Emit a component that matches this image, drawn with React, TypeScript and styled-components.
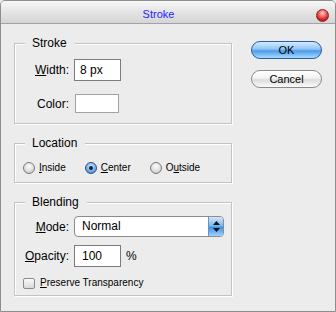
import React from 'react'
import styled, { createGlobalStyle, css } from 'styled-components'

const Global = createGlobalStyle`
    html, body {
        margin: 0;
        padding: 0;
        background: #ececec;
    }
    * {
        box-sizing: border-box;
    }
`

const Window = styled.div`
    width: 336px;
    height: 312px;
    display: flex;
    flex-direction: column;
    background: #ececec;
    border: 1px solid #8e8e8e;
    border-radius: 5px 5px 0 0;
    font-family: "Liberation Sans", Arial, sans-serif;
    color: #000;
    overflow: hidden;
`

const TitleBar = styled.div`
    height: 23px;
    flex: none;
    display: flex;
    align-items: flex-start;
    background: linear-gradient(#f7f7f7, #e6e6e6 45%, #d5d5d5);
    border-bottom: 1px solid #a3a3a3;
`

const Title = styled.div`
    flex: 1;
    text-align: center;
    padding-top: 7px;
    font-size: 11px;
    line-height: 13px;
    color: #1f22ff;
`

const CloseDot = styled.div`
    width: 13px;
    height: 13px;
    margin: 8px 6px 0 0;
    border-radius: 50%;
    border: 1px solid #8a2020;
    background: radial-gradient(circle at 50% 30%, #ffd2d2 0, #f26a6a 35%, #c41414 75%, #e85050 100%);
`

const Body = styled.div`
    display: flex;
    align-items: flex-start;
    padding: 17px 0 0 13px;
`

const LeftColumn = styled.div`
    display: flex;
    flex-direction: column;
    gap: 19px;
    padding-top: 2px;
`

const Group = styled.div<{ $height: number }>`
    position: relative;
    width: 218px;
    height: ${ p => p.$height }px;
    border: 1px solid #c3c3c3;
    box-shadow: 1px 1px 0 #fff, inset 1px 1px 0 #fff;
`

const Legend = styled.div`
    position: absolute;
    top: -8px;
    left: 10px;
    padding: 0 8px 0 7px;
    background: #ececec;
    font-size: 12px;
    line-height: 14px;
`

const FieldGrid = styled.div<{ $top: number, $gap: number }>`
    display: grid;
    grid-template-columns: 54px auto;
    column-gap: 5px;
    row-gap: ${ p => p.$gap }px;
    align-items: center;
    justify-items: start;
    padding-top: ${ p => p.$top }px;
`

const Label = styled.div`
    justify-self: end;
    font-size: 12px;
    line-height: 14px;
`

const Key = styled.span`
    text-decoration: underline;
    text-underline-offset: 1px;
`

const TextInput = styled.div<{ $width: number, $indent: number }>`
    width: ${ p => p.$width }px;
    height: 22px;
    background: #fff;
    border: 1px solid #7c7c7c;
    padding-left: ${ p => p.$indent }px;
    font-size: 12px;
    line-height: 20px;
`

const Swatch = styled.div`
    width: 44px;
    height: 19px;
    margin-left: 1px;
    background: #fff;
    border: 1px solid #a2a2a2;
`

const InlineRow = styled.div`
    display: flex;
    align-items: center;
    gap: 5px;
    font-size: 12px;
`

const Select = styled.div`
    width: 150px;
    height: 21px;
    display: flex;
    background: #fff;
    border: 1px solid #8c8c8c;
    border-radius: 4px;
    overflow: hidden;
`

const SelectValue = styled.div`
    flex: 1;
    padding-left: 7px;
    font-size: 12px;
    line-height: 19px;
`

const SelectArrows = styled.div`
    width: 15px;
    display: flex;
    align-items: center;
    justify-content: center;
    border-left: 1px solid #6d90c0;
    background: linear-gradient(#cfe6fb, #7cb8f0 45%, #3f92e6 55%, #9fd4ff);
`

const RadioRow = styled.div`
    display: flex;
    align-items: center;
    gap: 19px;
    height: 14px;
    margin-top: 17px;
    padding-left: 8px;
`

const Option = styled.div`
    display: flex;
    align-items: center;
    gap: 4px;
    font-size: 10px;
    line-height: 12px;
`

const Radio = styled.div<{ $checked?: boolean }>`
    width: 12px;
    height: 12px;
    border-radius: 50%;
    border: 1px solid #7b7b7b;
    background: radial-gradient(circle at 50% 35%, #fdfdfd 0, #e2e2e2 50%, #b9b9b9 100%);
    display: flex;
    align-items: center;
    justify-content: center;
    ${ p => p.$checked && css`
        border-color: #33507d;
        background: radial-gradient(circle at 50% 35%, #d6ecff 0, #7ab5ee 50%, #3a7fd0 100%);
    ` }
`

const Dot = styled.div`
    width: 4px;
    height: 4px;
    border-radius: 50%;
    background: #14213a;
`

const CheckRow = styled.div`
    display: flex;
    align-items: center;
    gap: 5px;
    margin-top: 10px;
    padding-left: 8px;
    font-size: 10px;
    line-height: 12px;
`

const Checkbox = styled.div`
    width: 12px;
    height: 11px;
    border: 1px solid #8a8a8a;
    border-radius: 2px;
    background: linear-gradient(#fafafa, #d8d8d8);
`

const RightColumn = styled.div`
    display: flex;
    flex-direction: column;
    gap: 11px;
    margin-left: 19px;
`

const Button = styled.div<{ $primary?: boolean }>`
    width: 71px;
    height: 18px;
    border-radius: 9px;
    display: flex;
    align-items: center;
    justify-content: center;
    font-size: 11px;
    border: 1px solid #8a8a8a;
    background: linear-gradient(#ffffff, #f2f2f2 45%, #dcdcdc 55%, #fbfbfb);
    ${ p => p.$primary && css`
        border-color: #2c5d9e;
        background: linear-gradient(#d3ebff, #8fc5f6 45%, #4c9be8 55%, #a9dcff);
    ` }
`

const Arrows = () => (
    <svg width="7" height="11" viewBox="0 0 7 11">
        <path d="M3.5 0 L7 4 L0 4 Z" fill="#111" />
        <path d="M3.5 11 L7 7 L0 7 Z" fill="#111" />
    </svg>
)

export default function App() {
    return (
        <>
            <Global />
            <Window>
                <TitleBar>
                    <Title>Stroke</Title>
                    <CloseDot />
                </TitleBar>
                <Body>
                    <LeftColumn>
                        <Group $height={81}>
                            <Legend>Stroke</Legend>
                            <FieldGrid $top={15} $gap={13}>
                                <Label><Key>W</Key>idth:</Label>
                                <TextInput $width={47} $indent={5}>8 px</TextInput>
                                <Label>Color:</Label>
                                <Swatch />
                            </FieldGrid>
                        </Group>
                        <Group $height={40}>
                            <Legend>Location</Legend>
                            <RadioRow>
                                <Option><Radio /><span><Key>I</Key>nside</span></Option>
                                <Option><Radio $checked><Dot /></Radio><span><Key>C</Key>enter</span></Option>
                                <Option><Radio /><span>O<Key>u</Key>tside</span></Option>
                            </RadioRow>
                        </Group>
                        <Group $height={94}>
                            <Legend>Blending</Legend>
                            <FieldGrid $top={13} $gap={8}>
                                <Label><Key>M</Key>ode:</Label>
                                <Select>
                                    <SelectValue>Normal</SelectValue>
                                    <SelectArrows><Arrows /></SelectArrows>
                                </Select>
                                <Label><Key>O</Key>pacity:</Label>
                                <InlineRow>
                                    <TextInput $width={47} $indent={7}>100</TextInput>
                                    <span>%</span>
                                </InlineRow>
                            </FieldGrid>
                            <CheckRow>
                                <Checkbox />
                                <span><Key>P</Key>reserve Transparency</span>
                            </CheckRow>
                        </Group>
                    </LeftColumn>
                    <RightColumn>
                        <Button $primary>OK</Button>
                        <Button>Cancel</Button>
                    </RightColumn>
                </Body>
            </Window>
        </>
    )
}
